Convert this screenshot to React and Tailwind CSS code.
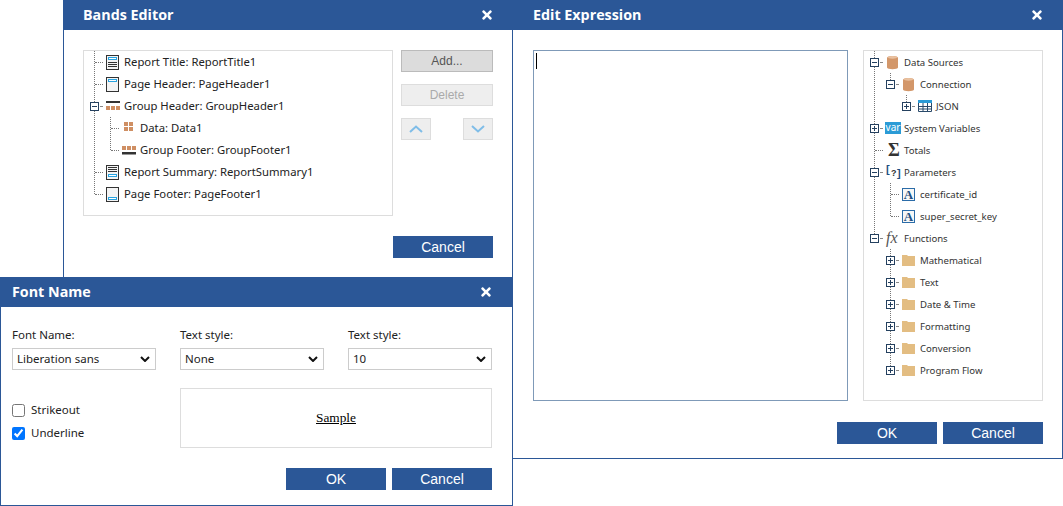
import { FaTimes } from "react-icons/fa";

const UI_FONT = "font-['Noto_Sans','Open_Sans',sans-serif]";

function BandBox({ children }) {
  return (
    <svg width="13" height="15" viewBox="0 0 13 15" className="shrink-0">
      <rect x="0.5" y="0.5" width="12" height="14" fill="#f4f4f4" stroke="#333" />
      {children}
    </svg>
  );
}

const Blue = ({ y }) => <rect x="2.5" y={y + 0.5} width="8" height="2" fill="#fff" stroke="#29a3e0" />;
const Lines = ({ ys }) => ys.map((y) => <rect key={y} x="2" y={y} width="9" height="1" fill="#333" />);

const ReportTitleIcon = () => <BandBox><Blue y={2} /><Lines ys={[7, 9, 11]} /></BandBox>;
const PageHeaderIcon = () => <BandBox><Blue y={2} /></BandBox>;
const ReportSummaryIcon = () => <BandBox><Lines ys={[2, 4, 6]} /><Blue y={9} /></BandBox>;
const PageFooterIcon = () => <BandBox><Blue y={10} /></BandBox>;

function GroupHeaderIcon() {
  return (
    <svg width="14" height="10" viewBox="0 0 14 10" className="shrink-0">
      <rect x="0" y="0" width="14" height="2" fill="#333" />
      <rect x="0" y="5" width="4" height="4" fill="#cf8f63" />
      <rect x="5" y="5" width="4" height="4" fill="#cf8f63" />
      <rect x="10" y="5" width="4" height="4" fill="#cf8f63" />
    </svg>
  );
}

function GroupFooterIcon() {
  return (
    <svg width="14" height="9" viewBox="0 0 14 9" className="shrink-0">
      <rect x="0" y="0" width="4" height="4" fill="#cf8f63" />
      <rect x="5" y="0" width="4" height="4" fill="#cf8f63" />
      <rect x="10" y="0" width="4" height="4" fill="#cf8f63" />
      <rect x="0" y="6" width="14" height="2.5" fill="#333" />
    </svg>
  );
}

function DataIcon() {
  return (
    <svg width="10" height="10" viewBox="0 0 10 10" className="shrink-0 ml-[2px] mb-[3px]">
      <rect x="0" y="0" width="4" height="4" fill="#cf8f63" />
      <rect x="5" y="0" width="4" height="4" fill="#cf8f63" />
      <rect x="0" y="5" width="4" height="4" fill="#cf8f63" />
      <rect x="5" y="5" width="4" height="4" fill="#cf8f63" />
    </svg>
  );
}

function CylinderIcon() {
  return (
    <svg width="11" height="15" viewBox="0 0 11 15" className="shrink-0 ml-[1px]">
      <path d="M0 2.5C0 0.4 11 0.4 11 2.5V12.5C11 14.8 0 14.8 0 12.5Z" fill="#d3976a" />
      <ellipse cx="5.5" cy="2.3" rx="4.6" ry="1.4" fill="#e9c1a0" />
    </svg>
  );
}

function TableIcon() {
  return (
    <svg width="14" height="12" viewBox="0 0 14 12" className="shrink-0">
      <rect x="0" y="0" width="14" height="3" fill="#2b9bd6" />
      <path d="M0.5 3V11.5H13.5V3M0.5 6.5H13.5M0.5 9H13.5M5 3V11.5M9.5 3V11.5" fill="none" stroke="#2a4a6b" />
    </svg>
  );
}

function FolderIcon() {
  return (
    <svg width="13" height="12" viewBox="0 0 13 12" className="shrink-0">
      <path d="M0 1H5L6 2H13V12H0Z" fill="#e3bd82" />
    </svg>
  );
}

function VarIcon() {
  return (
    <span className="shrink-0 -ml-px w-[16px] h-[12px] bg-[#2b9bd6] text-white text-[10px] leading-[10px] text-center font-['Noto_Sans',sans-serif]">
      var
    </span>
  );
}

function SigmaIcon() {
  return <span className="shrink-0 ml-[2px] text-[18px] leading-none font-bold text-[#333] font-['Liberation_Serif',serif]">Σ</span>;
}

function ParamsIcon() {
  return (
    <span className="shrink-0 relative w-[15px] h-[15px] text-[#1d4f80] font-bold font-['Liberation_Sans',sans-serif]">
      <span className="absolute left-0 -top-[1px] text-[11px] leading-none">[</span>
      <span className="absolute left-[5px] top-[4px] text-[9px] leading-none text-[#333]">?</span>
      <span className="absolute left-[11px] top-[3px] text-[11px] leading-none">]</span>
    </span>
  );
}

function FxIcon() {
  return <span className="shrink-0 text-[16px] leading-none italic text-[#555] font-['Liberation_Serif',serif]">fx</span>;
}

function VarTextIcon() {
  return (
    <span className="shrink-0 w-[13px] h-[13px] border border-[#2b6ca8] bg-[#f7f7f7] text-[#1d4f80] text-[13px] leading-[11px] font-bold text-center font-['Liberation_Serif',serif]">
      A
    </span>
  );
}

function Expander({ open }) {
  return (
    <span className="relative z-10 w-[9px] h-[9px] border border-[#24405f] bg-white block">
      <span className="absolute left-[1px] top-[3px] w-[5px] h-[1px] bg-[#24405f]" />
      {!open && <span className="absolute left-[3px] top-[1px] w-[1px] h-[5px] bg-[#24405f]" />}
    </span>
  );
}

const LEVELS = { 0: "pl-[6px]", 1: "pl-[22px]", 2: "pl-[38px]" };

function TreeRow({ level = 0, expander, icon, label, textClass }) {
  return (
    <div className={`relative flex items-center h-[22px] ${LEVELS[level]}`}>
      <span className="relative flex items-center w-[16px] h-full shrink-0">
        {expander ? (
          <>
            <Expander open={expander === "open"} />
            <span className="w-[3px] ml-[1px] border-t border-[#888]" />
          </>
        ) : (
          <span className="ml-[5px] w-[8px] border-t border-dotted border-[#777]" />
        )}
      </span>
      <span className="flex items-center w-[18px] shrink-0">{icon}</span>
      <span className={`whitespace-nowrap ${textClass}`}>{label}</span>
    </div>
  );
}

function Guide({ className }) {
  return <span className={`absolute w-0 border-l border-dotted border-[#777] ${className}`} />;
}

function Button({ children, className = "" }) {
  return (
    <button className={`h-[22px] w-[100px] bg-[#2b5797] text-white text-[14px] leading-none font-['Liberation_Sans',sans-serif] ${className}`}>
      {children}
    </button>
  );
}

function Dialog({ title, className, titleClass, children }) {
  return (
    <div className={`absolute bg-white border border-[#2b5797] flex flex-col ${className}`}>
      <div className={`-mx-px -mt-px h-[30px] shrink-0 bg-[#2b5797] flex items-center justify-between text-white ${titleClass}`}>
        <span className="text-[14.3px] leading-[28px] pb-px font-bold font-['Open_Sans',sans-serif]">{title}</span>
        <FaTimes size={14} />
      </div>
      {children}
    </div>
  );
}

function ChevronBtn({ up }) {
  return (
    <button className="w-[30px] h-[22px] bg-[#eeeeee] border border-[#dddddd] flex items-center justify-center">
      <svg width="14" height="8" viewBox="0 0 14 8">
        <path d={up ? "M1 7L7 1.5L13 7" : "M1 1L7 6.5L13 1"} fill="none" stroke="#7fbde8" strokeWidth="2" />
      </svg>
    </button>
  );
}

function BandsEditor() {
  const text = "pt-px text-[11.3px] text-[#222]";
  return (
    <Dialog title="Bands Editor" className="left-[63px] top-0 w-[450px] h-[300px] z-0" titleClass="pl-[20px] pr-[19px]">
      <div className="flex gap-[8px] pl-[19px] pt-[20px]">
        <div className={`relative w-[310px] h-[166px] border border-[#dddddd] ${UI_FONT}`}>
          <Guide className="left-[10px] top-0 h-[143px]" />
          <Guide className="left-[26px] top-[66px] h-[33px]" />
          <TreeRow icon={<ReportTitleIcon />} label="Report Title: ReportTitle1" textClass={text} />
          <TreeRow icon={<PageHeaderIcon />} label="Page Header: PageHeader1" textClass={text} />
          <TreeRow expander="open" icon={<GroupHeaderIcon />} label="Group Header: GroupHeader1" textClass={text} />
          <TreeRow level={1} icon={<DataIcon />} label="Data: Data1" textClass={text} />
          <TreeRow level={1} icon={<GroupFooterIcon />} label="Group Footer: GroupFooter1" textClass={text} />
          <TreeRow icon={<ReportSummaryIcon />} label="Report Summary: ReportSummary1" textClass={text} />
          <TreeRow icon={<PageFooterIcon />} label="Page Footer: PageFooter1" textClass={text} />
        </div>
        <div className="w-[92px] flex flex-col gap-[12px] font-['Liberation_Sans',sans-serif] text-[12px]">
          <button className="h-[22px] bg-[#dcdcdc] border border-[#bbbbbb] text-[#555]">Add...</button>
          <button className="h-[22px] bg-[#eeeeee] border border-[#dddddd] text-[#aaa]">Delete</button>
          <div className="flex justify-between">
            <ChevronBtn up />
            <ChevronBtn />
          </div>
        </div>
      </div>
      <div className="flex justify-end pr-[19px] pt-[20px]">
        <Button>Cancel</Button>
      </div>
    </Dialog>
  );
}

function EditExpression() {
  const text = "pt-[2px] text-[9.6px] text-[#333]";
  const folders = ["Mathematical", "Text", "Date & Time", "Formatting", "Conversion", "Program Flow"];
  return (
    <Dialog title="Edit Expression" className="left-[512px] top-0 w-[551px] h-[459px] z-10" titleClass="pl-[21px] pr-[19px]">
      <div className="flex pl-[20px] pt-[20px] gap-[15px]">
        <div className="w-[315px] h-[351px] border border-[#7f9ab8] p-[2px]">
          <div className="w-px h-[16px] bg-black" />
        </div>
        <div className={`relative w-[180px] h-[351px] border border-[#dddddd] ${UI_FONT}`}>
          <Guide className="left-[10px] top-0 h-[187px]" />
          <Guide className="left-[26px] top-[22px] h-[11px]" />
          <Guide className="left-[42px] top-[44px] h-[11px]" />
          <Guide className="left-[26px] top-[132px] h-[33px]" />
          <Guide className="left-[26px] top-[198px] h-[121px]" />
          <TreeRow expander="open" icon={<CylinderIcon />} label="Data Sources" textClass={text} />
          <TreeRow level={1} expander="open" icon={<CylinderIcon />} label="Connection" textClass={text} />
          <TreeRow level={2} expander="closed" icon={<TableIcon />} label="JSON" textClass={text} />
          <TreeRow expander="closed" icon={<VarIcon />} label="System Variables" textClass={text} />
          <TreeRow icon={<SigmaIcon />} label="Totals" textClass={text} />
          <TreeRow expander="open" icon={<ParamsIcon />} label="Parameters" textClass={text} />
          <TreeRow level={1} icon={<VarTextIcon />} label="certificate_id" textClass={text} />
          <TreeRow level={1} icon={<VarTextIcon />} label="super_secret_key" textClass={text} />
          <TreeRow expander="open" icon={<FxIcon />} label="Functions" textClass={text} />
          {folders.map((name) => (
            <TreeRow key={name} level={1} expander="closed" icon={<FolderIcon />} label={name} textClass={text} />
          ))}
        </div>
      </div>
      <div className="flex justify-end gap-[6px] pr-[19px] pt-[21px]">
        <Button>OK</Button>
        <Button>Cancel</Button>
      </div>
    </Dialog>
  );
}

function FontField({ label, value, options }) {
  return (
    <label className="w-[144px] flex flex-col gap-[5px]">
      <span className="text-[11.5px] leading-[16px] text-[#222]">{label}</span>
      <span className="relative block">
        <select defaultValue={value} className="appearance-none block h-[22px] w-full border border-[#cccccc] bg-white pl-[4px] text-[11.5px] text-[#222]">
          {options.map((o) => <option key={o}>{o}</option>)}
        </select>
        <svg width="10" height="6" viewBox="0 0 10 6" className="absolute right-[6px] top-[8px] pointer-events-none">
          <path d="M1 1L5 5L9 1" fill="none" stroke="#111" strokeWidth="2" />
        </svg>
      </span>
    </label>
  );
}

function FontName() {
  return (
    <Dialog title="Font Name" className="left-0 top-[277px] w-[513px] h-[229px] z-20" titleClass="pl-[12px] pr-[20px]">
      <div className={`flex flex-col ${UI_FONT} pl-[11px] pr-[20px]`}>
        <div className="flex gap-[24px] pt-[20px]">
          <FontField label="Font Name:" value="Liberation sans" options={["Liberation sans"]} />
          <FontField label="Text style:" value="None" options={["None"]} />
          <FontField label="Text style:" value="10" options={["10"]} />
        </div>
        <div className="flex pt-[18px]">
          <div className="w-[168px] flex flex-col gap-[9px] pt-[15px] text-[11.5px] text-[#222]">
            <label className="flex items-center gap-[6px] h-[14px]">
              <input type="checkbox" className="m-0 w-[13px] h-[13px]" />
              Strikeout
            </label>
            <label className="flex items-center gap-[6px] h-[14px]">
              <input type="checkbox" defaultChecked className="m-0 w-[13px] h-[13px]" />
              Underline
            </label>
          </div>
          <div className="w-[312px] h-[60px] border border-[#dddddd] flex items-center justify-center text-[13.33px] underline text-black font-['Liberation_Serif',serif]">
            Sample
          </div>
        </div>
        <div className="flex justify-end gap-[6px] pt-[20px]">
          <Button>OK</Button>
          <Button>Cancel</Button>
        </div>
      </div>
    </Dialog>
  );
}

export default function App() {
  return (
    <div className="relative w-[1063px] h-[506px] overflow-hidden bg-white">
      <BandsEditor />
      <EditExpression />
      <FontName />
    </div>
  );
}
